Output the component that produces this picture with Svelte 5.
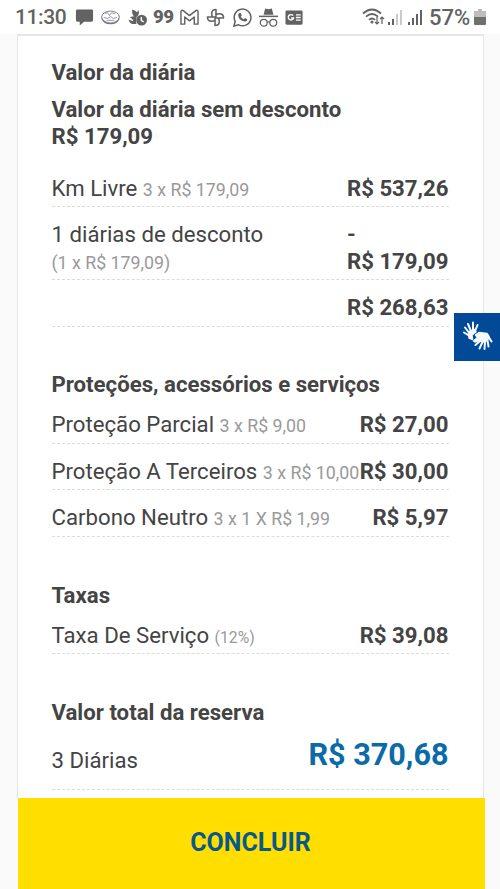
<script>
	const diarias = [
		{ nome: "Km Livre", detalhe: "3 x R$ 179,09", valor: "R$ 537,26" },
		{ nome: "1 diárias de desconto", detalhe: "(1 x R$ 179,09)", valor: "R$ 179,09", desconto: true },
		{ nome: "", detalhe: "", valor: "R$ 268,63" }
	]

	const servicos = [
		{ nome: "Proteção Parcial", detalhe: "3 x R$ 9,00", valor: "R$ 27,00" },
		{ nome: "Proteção A Terceiros", detalhe: "3 x R$ 10,00", valor: "R$ 30,00" },
		{ nome: "Carbono Neutro", detalhe: "3 x 1 X R$ 1,99", valor: "R$ 5,97" }
	]

	const taxas = [
		{ nome: "Taxa De Serviço", detalhe: "(12%)", valor: "R$ 39,08", menor: true }
	]
</script>

{#snippet linhas(lista)}
	{#each lista as linha}
		<div class="linha">
			<div class="nome">
				{linha.nome}
				{#if linha.desconto}<br>{/if}
				<small class:menor={linha.menor}>{linha.detalhe}</small>
			</div>
			<div class="valor">{#if linha.desconto}-<br>{/if}{linha.valor}</div>
		</div>
	{/each}
{/snippet}

<div class="tela">
	<header>
		<span class="hora">11:30</span>
		<div class="icones">
			<svg viewBox="0 0 20 20"><path fill="#626262" d="M2.500 1.500h15q1.500 0 1.500 1.500v10q0 1.500-1.500 1.500H9.500L5 18.500v-4H2.500Q1 14.500 1 13V3q0-1.500 1.500-1.500z"/></svg>
			<svg viewBox="0 0 20 20" fill="none" stroke="#777789"><ellipse cx="10" cy="9.500" rx="9.300" ry="6.300"/><path stroke-width="1.300" d="M1 11q2 5.500 9 5.500t9-5.500"/><path stroke-width=".8" d="M4 6l3-1 2 3 2-3 4 1M3 10l4 1 3-2 3 2 4-1M6 13h8"/></svg>
			<svg viewBox="0 0 20 20" fill="#626262"><path d="M4.500 1.500q3 .5 5 3L11 2q1.500 3-.5 6-3 2-1.500 8.500Q2.500 18.500.5 12l5 2Q5.500 11.500 2 10q1.500-1.500 4-1-2.500-3.500-1.500-7.500z"/><circle cx="14.300" cy="12.700" r="5.700"/><path d="M14 9.500V13l2.500 1.500" fill="none" stroke="#fff" stroke-width="1.500"/></svg>
			<span class="noventa">99</span>
			<svg viewBox="0 0 20 20" fill="none" stroke="#626262" stroke-width="1.500"><path stroke-linejoin="round" d="M1 4q0-1.800 2-1.500l7 5.500 7-5.500q2-.3 2 1.500v13h-4V9.500l-5 4-5-4V17H1z"/></svg>
			<svg viewBox="0 0 20 20" fill="none" stroke="#626262" stroke-width="1.600"><path stroke-linejoin="round" d="M10.500 10V1.500q-4.500 0-4.500 4.300Q6 8 7 9.500M10 10.500h8.500q0-4.500-4.300-4.500-2.200 0-3.700 1M9.500 10v8.500q4.500 0 4.500-4.300 0-2.200-1-3.700M10 9.500H1.500Q1.500 14 5.800 14 8 14 9.500 13"/></svg>
			<svg viewBox="0 0 20 20"><path fill="none" stroke="#626262" stroke-width="1.600" d="M1 19l1.300-5A8.800 8.800 0 1 1 6 17.700z"/><path fill="#626262" d="M6.700 5.300h1.500l1 2.500-1 1.300q1 2 3.200 2.800l1.200-1.300 2.400 1.200q0 2.500-2.700 2.500Q6 13 5.400 7.500q0-1.300 1.300-2.200z"/></svg>
			<svg viewBox="0 0 20 20"><path fill="#626262" d="M6.500.5l3.500.9 3.500-.9 1.700 6.500H4.800z"/><path fill="#626262" d="M0 8h20v1.600H0z"/><g fill="none" stroke="#626262" stroke-width="1.300"><circle cx="5" cy="15.500" r="3.600"/><circle cx="15" cy="15.500" r="3.600"/><path d="M8.400 15q1.600-1 3.200 0"/></g></svg>
			<svg viewBox="0 0 20 20"><rect x=".5" y="2.500" width="18" height="15" rx="1.500" fill="#626262"/><path fill="none" stroke="#fff" stroke-width="1.500" d="M8.500 8A2.800 2.800 0 1 0 9 10.500H6.500M11.500 7.200h5M11.500 10h5M11.500 12.800h5"/></svg>
		</div>
		<div class="sinais">
			<svg class="wifi" viewBox="0 0 23 20"><g fill="none" stroke="#626262" stroke-width="1.800"><path d="M1 6.500q9-8 18 0M4 9.700q6-5.500 12 0M7 12.800q3-2.700 6 0"/></g><circle cx="10" cy="15" r="1.500" fill="#626262"/><path fill="none" stroke="#626262" stroke-width="1.200" d="M15 10v7m-2-2l2 2 2-2M20 17v-7m-2 2l2-2 2 2"/></svg>
			<svg class="barras" viewBox="0 0 16 18"><path fill="#626262" d="M1 14h2v3H1zM5 11h2v6H5z"/><path fill="#cacaca" d="M9 6h2v11H9zM13 2h2v15h-2z"/></svg>
			<svg class="barras" viewBox="0 0 16 18"><path fill="#626262" d="M1 14h2v3H1zM5 10h2v7H5zM9 6h2v11H9zM13 2h2v15h-2z"/></svg>
			<span class="carga">57%</span>
			<svg class="bateria" viewBox="0 0 12 18"><path fill="#bdbdbd" d="M4 1h4v2h4v6H0V3h4z"/><path fill="#707070" d="M0 9h12v7q0 1-1 1H1q-1 0-1-1z"/></svg>
		</div>
	</header>

	<main>
		<section>
			<h2>Valor da diária</h2>
			<h3>Valor da diária sem desconto<br>R$ 179,09</h3>
			{@render linhas(diarias)}
		</section>
		<section class="servicos">
			<h2>Proteções, acessórios e serviços</h2>
			{@render linhas(servicos)}
		</section>
		<section class="taxas">
			<h2>Taxas</h2>
			{@render linhas(taxas)}
		</section>
		<section class="total">
			<h2>Valor total da reserva</h2>
			<div class="linha">
				<div class="nome">3 Diárias</div>
				<div class="valor">R$ 370,68</div>
			</div>
		</section>
	</main>

	<button class="concluir">CONCLUIR</button>

	<div class="libras">
		<svg viewBox="0 0 32 32" fill="none" stroke="#f4f8ff" stroke-linecap="round" stroke-linejoin="round">
			<path stroke-width="2" d="M7.500 12L4 7.500M9.500 10L7 4M12 9.500V2.500M14.500 10L16.500 5M7 15l-4-2.500"/>
			<path fill="#f4f8ff" stroke-width="1.500" d="M7.500 12l6-2.500 1.500 2.500-4 3 .5 4.500L8 18z"/>
			<path fill="#f4f8ff" stroke-width="1.500" d="M14.500 15l3.500-2.500 8 1 2 3-1.500 4-5 1.500-3.500-1.500-4 1.500-1.500-1 4-3.500z"/>
			<path stroke-width="2" d="M19 21l-4.500 4M21.500 22l-3 6.500M24 22l-.5 7M26.500 20.500l1 6M28 17.500l2.500 4"/>
		</svg>
	</div>
</div>

<style>
	:global(body) {
		background-color: #fafafa;
	}
	* {
		margin: 0;
		box-sizing: border-box;
	}
	.tela {
		position: relative;
		display: grid;
		grid-template-rows: 34px 764px 91px;
		width: 500px;
		height: 889px;
		overflow: hidden;
		font-family: Roboto, sans-serif;
		font-size: 22.200px;
		line-height: 26.400px;
		color: #444;
	}

	header {
		display: flex;
		align-items: center;
		justify-content: space-between;
		padding: 0 14px 0 15px;
		background-color: #fff;
		color: #626262;
	}
	.hora {
		width: 60px;
		font-size: 21px;
		font-weight: 500;
		letter-spacing: -0.4px;
	}
	.icones {
		display: flex;
		align-items: center;
		gap: 7.300px;
		margin-right: auto;
	}
	.icones svg, .noventa {
		width: 19px;
		height: 19px;
	}
	.noventa {
		margin: 0 1px 0 -1px;
		font-size: 18.500px;
		font-weight: 900;
		line-height: 19px;
		letter-spacing: -0.4px;
	}
	.sinais {
		display: flex;
		align-items: center;
	}
	.wifi {
		width: 23px;
		height: 20px;
		margin-right: 2px;
	}
	.barras {
		width: 16px;
		height: 18px;
		margin-right: 4px;
	}
	.carga {
		width: 44px;
		margin: 2px 1px 0 2px;
		font-size: 22px;
		font-weight: 500;
	}
	.bateria {
		width: 12px;
		height: 18px;
	}

	main {
		width: 467px;
		margin-left: 17px;
		padding: 23px 34.500px 0 33.500px;
		background-color: #fff;
		border: 1px solid #e6e6e6;
		border-top-width: 2px;
		border-bottom: none;
	}
	h2, h3 {
		font-size: 22.200px;
		font-weight: 700;
	}
	h3 {
		margin: 11px 0 11.400px;
	}
	.linha {
		display: flex;
		justify-content: space-between;
		padding: 14.100px 0 5px;
		border-bottom: 1px dashed #dcdcdc;
		white-space: nowrap;
	}
	.nome {
		min-width: 0;
	}
	small {
		font-size: 17.800px;
		line-height: 1;
		color: #999;
	}
	small.menor {
		font-size: 15.800px;
	}
	.valor {
		flex-shrink: 0;
		font-weight: 700;
	}
	.servicos, .taxas, .total {
		padding-top: 45px;
	}
	.servicos {
		padding-top: 44.600px;
	}
	.servicos h2, .taxas h2 {
		margin-bottom: -0.4px;
	}
	.total .linha {
		padding: 21.800px 0 15px;
	}
	.total .valor {
		margin-top: -5.500px;
		font-size: 30.600px;
		color: #0a6ba8;
	}

	.concluir {
		width: 467px;
		margin-left: 18px;
		padding: 0 2px 2px 0;
		border: none;
		background-color: #ffde00;
		color: #07598c;
		font-family: inherit;
		font-size: 25px;
		font-weight: 700;
	}

	.libras {
		position: absolute;
		top: 313px;
		right: 0;
		width: 46px;
		height: 48px;
		padding: 7px;
		background-color: #024a98;
	}
	.libras svg {
		display: block;
		width: 32px;
		height: 32px;
	}
</style>
